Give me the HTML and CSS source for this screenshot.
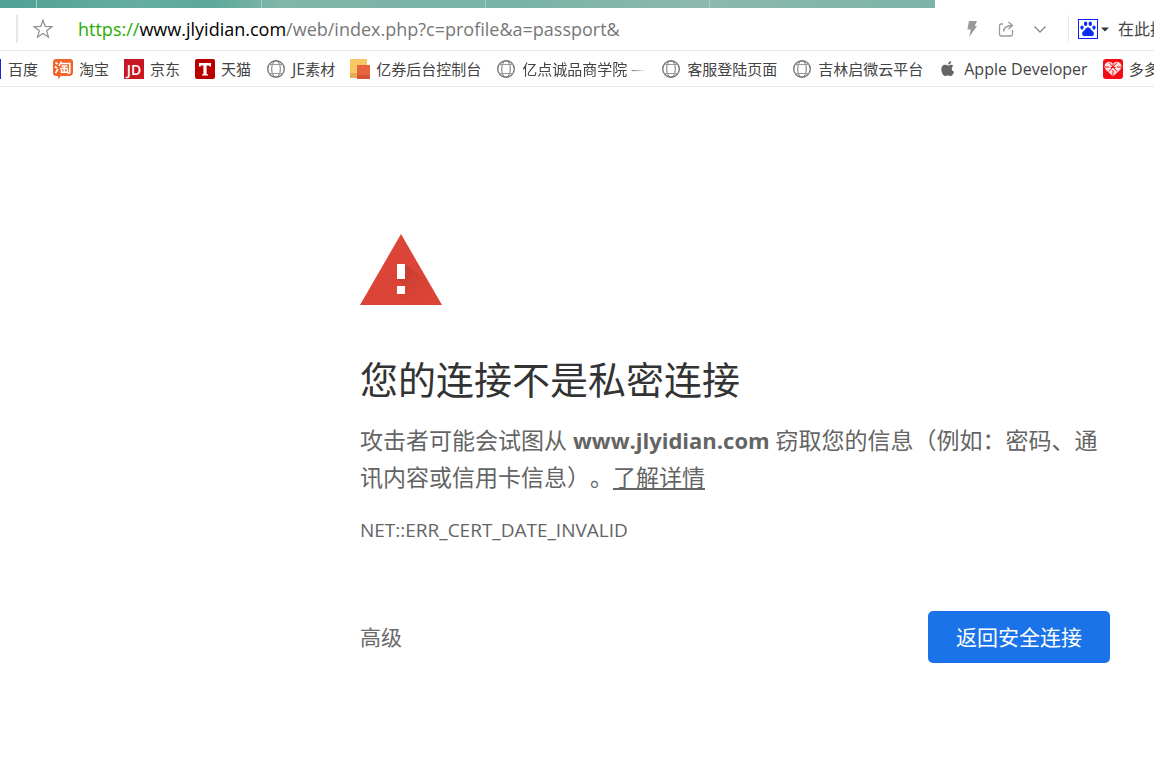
FILE: index.html
```html
<!DOCTYPE html>
<html lang="zh-CN">
<head>
    <meta charset="UTF-8">
    <meta name="viewport" content="width=device-width, initial-scale=1.0">
    <title>隐私设置错误</title>
    <link rel="stylesheet" href="styles.css">
</head>
<body>
    <svg class="defs" width="0" height="0" aria-hidden="true">
        <symbol id="globe" viewBox="0 0 20 20">
            <g fill="none" stroke="#777">
                <circle cx="10" cy="10" r="8.3" stroke-width="1.4"/>
                <ellipse cx="10" cy="10" rx="4.3" ry="8.3"/>
                <path d="M3.2 5.5h13.6M3.2 14.5h13.6" stroke="#999"/>
            </g>
        </symbol>
    </svg>

    <div class="tabstrip"><i></i><i></i><i></i><i></i></div>

    <header class="toolbar">
        <button class="icon-btn star" aria-label="收藏">
            <svg width="22" height="22" viewBox="0 0 22 22"><path d="M11 2.2l2.3 6.2 6.6.3-5.2 4.1 1.8 6.4-5.5-3.7-5.5 3.7 1.8-6.4-5.2-4.1 6.6-.3z" fill="none" stroke="#8c8c8c" stroke-width="1.2"/></svg>
        </button>
        <div class="url" role="textbox" aria-label="网址" contenteditable="true" spellcheck="false"><span class="scheme">https://</span><span class="host">www.jlyidian.com</span>/web/index.php?c=profile&amp;a=passport&amp;</div>
        <div class="actions">
            <button class="icon-btn" aria-label="极速模式">
                <svg width="16" height="18" viewBox="0 0 16 18"><path d="M5 1h8l-2.3 5H13L5.2 17l1.6-7.5H3.4z" fill="#999"/></svg>
            </button>
            <button class="icon-btn" aria-label="分享">
                <svg width="16" height="18" viewBox="0 0 16 18"><path d="M5 4H3.2Q1.5 4 1.5 5.7v8.6Q1.5 16 3.2 16h9.6q1.7 0 1.7-1.7V10M5.5 11.5Q5.5 6 14 5.5M10.5 2l4 3.500-4 3.500" fill="none" stroke="#999" stroke-width="1.3"/></svg>
            </button>
            <button class="icon-btn" aria-label="更多">
                <svg width="16" height="18" viewBox="0 0 16 18"><path d="M2.5 6.5L8 12l5.500-5.500" fill="none" stroke="#888" stroke-width="1.3"/></svg>
            </button>
        </div>
        <form class="search">
            <button type="button" class="icon-btn engine" aria-label="选择搜索引擎">
                <svg width="20" height="20" viewBox="0 0 20 20">
                    <rect x=".5" y=".5" width="19" height="19" fill="#fff" stroke="#0a1cff"/>
                    <g fill="#0a2cf5">
                        <ellipse cx="7.6" cy="4.8" rx="1.7" ry="2.3"/>
                        <ellipse cx="12.3" cy="4.8" rx="1.7" ry="2.3"/>
                        <ellipse cx="4" cy="8.6" rx="1.6" ry="2.1"/>
                        <ellipse cx="16" cy="8.6" rx="1.6" ry="2.1"/>
                        <path d="M10 8.200c1.600 0 2.300 1.500 3.400 2.700 1.300 1.300 2.800 2.100 2.500 4.200-.3 2.200-2.300 2.300-3.700 2-1.500-.3-2.900-.3-4.400 0-1.400.3-3.400.2-3.700-2-.3-2.100 1.200-2.900 2.500-4.200C7.700 9.700 8.400 8.200 10 8.200z"/>
                    </g>
                </svg>
                <svg width="8" height="5" viewBox="0 0 8 5"><path d="M0 .5h8l-4 4z" fill="#333"/></svg>
            </button>
            <input type="text" placeholder="在此搜索" aria-label="搜索">
        </form>
    </header>

    <nav class="bookmarks">
        <a href="#"><svg class="edge" width="2" height="20"><path d="M0 0h1v20H0z" fill="#1b24d8"/></svg>百度</a>
        <a href="#">
            <svg width="20" height="20" viewBox="0 0 20 20">
                <path d="M3 0h14q3 0 3 3v10q0 4-4 4H8l-3 3v-3H3q-3 0-3-3V3q0-3 3-3z" fill="#f4642a"/>
                <path d="M2.5 3.500l2 1.500M1.800 7.500l2.200 1.500M2.500 14l2.500-4M8.300 2.500L6 7M7.500 4.500h9.300v8.500q0 1.500-2 1.300M8.500 7h6M7 9.500h8M11.300 7v6M8.500 10.500v2.800h6v-2.800" fill="none" stroke="#fff" stroke-width="1.6"/>
            </svg>淘宝
        </a>
        <a href="#">
            <svg width="20" height="20" viewBox="0 0 20 20">
                <rect width="20" height="20" fill="#c91623"/>
                <text x="10" y="16" text-anchor="middle" class="logo-jd">JD</text>
            </svg>京东
        </a>
        <a href="#">
            <svg width="20" height="20" viewBox="0 0 20 20">
                <rect width="20" height="20" rx="2" fill="#b80000"/>
                <path d="M4 4h12v3.500h-1.500L14 6.500h-2.400V15l1.400.500V16.500H7V15.500L8.400 15V6.500H6l-.5 1H4z" fill="#fff"/>
            </svg>天猫
        </a>
        <a href="#"><svg width="20" height="20"><use href="#globe"/></svg><span><span class="latin">JE</span>素材</span></a>
        <a href="#">
            <svg width="20" height="20" viewBox="0 0 20 20">
                <path d="M0 0h17v17H0z" fill="#f8c662"/>
                <path d="M0 14h7v5H0z" fill="#dfae55"/>
                <path d="M7 6h13v14H7z" fill="#e8643f"/>
                <path d="M7 16h13v4H7z" fill="#d45535"/>
            </svg>亿券后台控制台
        </a>
        <a href="#"><svg width="20" height="20"><use href="#globe"/></svg><span class="faded">亿点诚品商学院 —</span></a>
        <a href="#"><svg width="20" height="20"><use href="#globe"/></svg>客服登陆页面</a>
        <a href="#"><svg width="20" height="20"><use href="#globe"/></svg>吉林启微云平台</a>
        <a href="#">
            <svg width="20" height="20" viewBox="0 0 20 20">
                <path d="M13.200 2c.1 2-1.400 3.600-3.200 3.600C9.900 3.700 11.400 2.200 13.200 2zM15.300 6.900c-2.300 1.400-2 4.700.8 5.800-.7 2-2.100 4.300-3.500 4.300-1.100 0-1.400-.6-2.700-.6s-1.600.6-2.600.6c-2 0-4-3.700-4-6.600 0-3 1.800-4.600 3.700-4.600 1.200 0 2 .7 3 .7s1.900-.8 3.300-.8c.8 0 1.600.5 2 1.200z" fill="#666"/>
            </svg><span class="latin">Apple Developer</span>
        </a>
        <a href="#">
            <svg width="20" height="20" viewBox="0 0 20 20">
                <rect width="20" height="20" rx="3" fill="#f20d14"/>
                <path d="M10 17.5L3 11Q0 7 3 4q3.500-2.500 7 .5Q13.500 1.500 17 4q3 3 0 7z" fill="#ffe3e0"/>
                <path d="M6 3.500l8 9M14 3.500l-8 9M10 4.500V7M2 8h4M14 8h4M10 11v6M7.500 8.500h5" stroke="#f20d14" stroke-width="1"/>
            </svg>多多
        </a>
    </nav>

    <main class="interstitial">
        <svg class="warning" width="82" height="71" viewBox="0 0 82 71" role="img" aria-label="警告">
            <defs>
                <linearGradient id="shade" x1="0" y1="0" x2="1" y2="1">
                    <stop offset="0" stop-color="#b9372c"/>
                    <stop offset=".8" stop-color="#db4437" stop-opacity="0"/>
                </linearGradient>
            </defs>
            <path d="M41 0l41 71H0z" fill="#db4437"/>
            <path d="M45 30l22 16 15 25H50L37 60h8V52l-8-7h8z" fill="url(#shade)"/>
            <path d="M37 30h8v15h-8zM37 52h8v8h-8z" fill="#fff"/>
        </svg>
        <h1>您的连接不是私密连接</h1>
        <p class="message">攻击者可能会试图从 <strong>www.jlyidian.com</strong> 窃取您的信息（例如：密码、通讯内容或信用卡信息）。<a href="#">了解详情</a></p>
        <p class="error-code">NET::ERR_CERT_DATE_INVALID</p>
        <div class="buttons">
            <button class="details">高级</button>
            <button class="primary">返回安全连接</button>
        </div>
    </main>
</body>
</html>
```
FILE: styles.css
```css
* {
    box-sizing: border-box;
}
body {
    margin: 0;
    background: #fff;
    color: #646464;
    font-family: "Open Sans", "Noto Sans CJK SC", sans-serif;
    overflow-x: hidden;
}
button, input {
    font-family: inherit;
    border: none;
    background: none;
    padding: 0;
}
button {
    cursor: pointer;
}
svg {
    display: block;
    flex-shrink: 0;
}
.defs {
    position: absolute;
}

/* tabs */
.tabstrip {
    display: grid;
    grid-template-columns: 37px 225px 224px 224px;
    width: 81%;
    height: 8px;
    background: linear-gradient(90deg, #4fa294, #66ad9f 15%, #5ba798 22%, #7fb6a8 30%, #78b3a6 55%, #8cb9ab 75%, #7bb4a7);
}
.tabstrip i {
    border-right: 1px solid #a5cdc3;
}

/* address bar */
.toolbar {
    display: flex;
    align-items: center;
    height: 43px;
    padding-left: 16px;
    border-bottom: 1px solid #e8e8e8;
}
.icon-btn {
    display: flex;
    align-items: center;
}
.star {
    height: 28px;
    padding: 0 14px;
    border-left: 2px solid #e8e8e8;
}
.url {
    flex: 1;
    min-width: 0;
    margin-left: 10px;
    font-size: 18px;
    line-height: 28px;
    color: #777;
    white-space: nowrap;
    overflow: hidden;
    outline: none;
}
.scheme {
    color: #2bab00;
}
.host {
    color: #000;
}
.actions {
    display: flex;
    gap: 18px;
    padding-right: 20px;
}
.search {
    display: flex;
    align-items: center;
    width: 86px;
    height: 28px;
    padding-left: 9px;
    border-left: 1px solid #e8e8e8;
}
.engine {
    gap: 3px;
    margin-right: 9px;
}
.search input {
    flex: 1;
    min-width: 0;
    font-size: 16px;
    outline: none;
}
.search input::placeholder {
    color: #444;
}

/* bookmarks */
.bookmarks {
    display: flex;
    align-items: center;
    gap: 15px;
    height: 36px;
    border-bottom: 1px solid #e8e8e8;
    overflow: hidden;
}
.bookmarks a {
    display: flex;
    align-items: center;
    flex-shrink: 0;
    gap: 6px;
    font-size: 15px;
    line-height: 22px;
    color: #444;
    text-decoration: none;
    white-space: nowrap;
}
.latin {
    font-size: 16px;
}
.faded {
    -webkit-mask-image: linear-gradient(90deg, #000 84%, transparent);
    mask-image: linear-gradient(90deg, #000 84%, transparent);
}
.logo-jd {
    font: 600 14px "Open Sans", sans-serif;
    fill: #fff;
}

/* certificate warning */
.interstitial {
    max-width: 750px;
    margin: 147px 44px 0 auto;
}
h1 {
    margin: 47px 0 16px;
    font-size: 38px;
    line-height: 54px;
    font-weight: 400;
    color: #333;
}
.message {
    margin: 0;
    font-size: 23px;
    line-height: 37px;
    text-spacing-trim: space-all;
}
.message strong {
    font-size: 22px;
}
.message a {
    color: inherit;
}
.error-code {
    margin: 20px 0 0;
    font-size: 19px;
    line-height: 28px;
}
.buttons {
    display: flex;
    align-items: center;
    justify-content: space-between;
    margin-top: 67px;
}
.buttons button {
    font-size: 21px;
    line-height: 32px;
}
.details {
    color: #696969;
}
.buttons .primary {
    padding: 10px 28px;
    border-radius: 5px;
    background: #1a73e8;
    color: #fff;
}
```
